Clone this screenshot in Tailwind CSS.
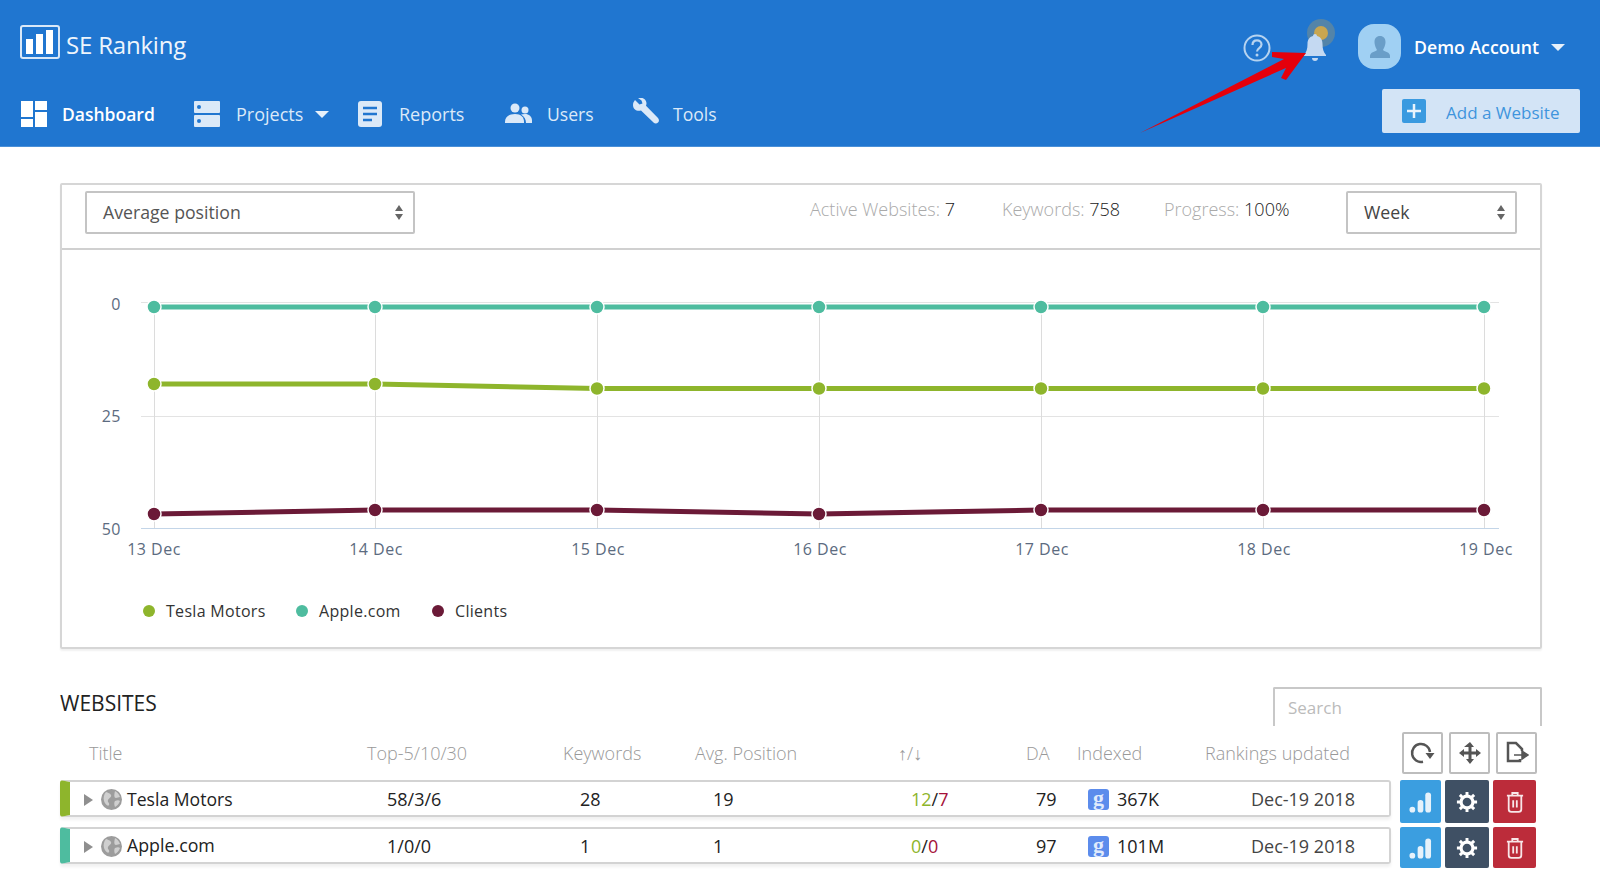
<!DOCTYPE html>
<html lang="en">
<head>
  <meta charset="UTF-8" />
  <title>SE Ranking - Dashboard</title>
  <script src="https://cdn.jsdelivr.net/npm/@tailwindcss/browser@4"></script>
</head>
<body class="relative h-[887px] w-[1600px] overflow-hidden bg-white font-['Open_Sans',sans-serif] text-[#222]">

  <!-- header -->
  <header class="h-[147px] bg-[#2076d0] border-b border-[#4a90d8]">
    <div class="flex h-[89px] items-center">
      <svg class="ml-[20px] mt-[-5px]" width="40" height="34" viewBox="0 0 40 34">
        <rect x="1" y="1" width="38" height="32" rx="2" fill="none" stroke="#d9e8f8" stroke-width="2"/>
        <rect x="6" y="14" width="7" height="15" fill="#fff"/>
        <rect x="16" y="9" width="7" height="20" fill="#fff"/>
        <rect x="26" y="5" width="7" height="24" fill="#fff"/>
      </svg>
      <span class="ml-[6px] w-[121px] whitespace-nowrap text-[24px] font-medium leading-none tracking-[-0.2px] text-[#eef5fc]">SE Ranking</span>

      <svg class="ml-[1056px] mt-[6px]" width="28" height="28" viewBox="0 0 28 28">
        <circle cx="14" cy="14" r="12.5" fill="none" stroke="#b6d3f0" stroke-width="2"/>
        <path d="M9.5 11c0-3 2-4.600 4.500-4.600s4.500 1.600 4.500 4.200c0 3.600-4.500 3.400-4.500 7" fill="none" stroke="#b6d3f0" stroke-width="2.200"/>
        <circle cx="14" cy="21" r="1.500" fill="#b6d3f0"/>
      </svg>

      <div class="relative ml-[30px] h-[42px] w-[30px]">
        <span class="absolute left-[6px] top-[-5px] h-[28px] w-[28px] rounded-full bg-[#c9a64f]/30"></span>
        <span class="absolute left-[13px] top-[2px] h-[14px] w-[14px] rounded-full bg-[#c9a64f]"></span>
        <svg class="absolute left-[3px] top-[10px]" width="22" height="28" viewBox="0 0 22 28">
          <path d="M11 0c1.200 0 2 .8 2 2 4 1 5.500 4 5.500 8 0 5 1 8 3.500 11v1H0v-1c2.500-3 3.500-6 3.500-11 0-4 1.500-7 5.500-8 0-1.200.8-2 2-2z" fill="#c4d9f2"/>
          <path d="M8 24h6c0 2-1.200 3-3 3s-3-1-3-3z" fill="#c4d9f2"/>
        </svg>
      </div>

      <div class="ml-[27px] mt-[4px] flex h-[45px] w-[43px] items-center justify-center rounded-[16px] bg-[#a0d0f3]">
        <svg width="22" height="24" viewBox="0 0 22 24"><path d="M11 1c3.500 0 5.500 2.500 5.500 6S14.500 14 14 15c2 2 7 2 7 6v2H1v-2c0-4 5-4 7-6-.5-1-2.500-4.500-2.500-8S7.500 1 11 1z" fill="#6a9ec8"/></svg>
      </div>
      <span class="ml-[13px] mt-[6px] text-[17.7px] font-semibold text-white">Demo Account</span>
      <span class="ml-[12px] mt-[6px] h-0 w-0 border-x-[7px] border-t-[7px] border-x-transparent border-t-[#e6f0fa]"></span>
    </div>

    <div class="flex h-[57px] items-start">
      <nav class="flex h-[50px] w-[717px] items-center text-[18px] text-[#dbe9f8]">
        <a class="ml-[21px] flex w-[173px] items-center text-[17.5px] font-semibold text-white">
          <svg width="26" height="26" viewBox="0 0 26 26" fill="#fff"><rect width="12" height="16"/><rect x="14" width="12" height="9"/><rect y="18" width="12" height="8"/><rect x="14" y="11" width="12" height="15"/></svg>
          <span class="ml-[15px]">Dashboard</span>
        </a>
        <a class="flex w-[164px] items-center">
          <svg width="26" height="26" viewBox="0 0 26 26"><rect width="26" height="12" rx="1" fill="#dbe9f8"/><rect y="14" width="26" height="12" rx="1" fill="#dbe9f8"/><circle cx="5" cy="6" r="2" fill="#2076d0"/><circle cx="5" cy="20" r="2" fill="#2076d0"/></svg>
          <span class="ml-[16px]">Projects</span>
          <span class="ml-[12px] h-0 w-0 border-x-[7px] border-t-[7px] border-x-transparent border-t-[#e6f0fa]"></span>
        </a>
        <a class="flex w-[147px] items-center">
          <svg width="24" height="26" viewBox="0 0 24 26"><rect width="24" height="26" rx="3" fill="#dbe9f8"/><path d="M5 7h14M5 13h14M5 19h9" stroke="#2076d0" stroke-width="2.500"/></svg>
          <span class="ml-[17px]">Reports</span>
        </a>
        <a class="flex w-[128px] items-center">
          <svg width="27" height="22" viewBox="0 0 27 22" fill="#dbe9f8"><circle cx="10" cy="5" r="4.500"/><path d="M0 19c0-5 4-8 10-8s9 3 9 8v1H0z"/><circle cx="20" cy="7" r="3.500"/><path d="M16 11.500c1-.4 2.500-.6 4-.6 4 0 7 2.400 7 6.600v2.500h-6c0-3.500-1.500-6.500-5-8.500z"/></svg>
          <span class="ml-[15px] text-[17.6px]">Users</span>
        </a>
        <a class="flex items-center">
          <svg class="mt-[-6px]" width="26" height="26" viewBox="0 0 26 26"><path d="M2 2l4.500 4.500 3-1-1-3L5 0c4-1 8 .5 8.500 5 0 1-.2 2-.5 2.700L25 20c1.500 2 1 3.500 0 4.500s-3 1.500-4.500 0L8 12.500c-4 1.200-8-1.200-8-5.500 0-2 .8-3.500 2-5z" fill="#dbe9f8"/></svg>
          <span class="ml-[14px] text-[17.6px]">Tools</span>
        </a>
      </nav>
      <button class="ml-[665px] flex h-[44px] w-[198px] items-center rounded-[2px] bg-[#d3e4f6] text-[17px] text-[#3f95dd]">
        <span class="ml-[20px] flex h-[24px] w-[24px] items-center justify-center rounded-[2px] bg-[#3a9ae0]">
          <svg width="14" height="14" viewBox="0 0 14 14"><path d="M7 0v14M0 7h14" stroke="#e8f3fc" stroke-width="2.500"/></svg>
        </span>
        <span class="ml-[20px] mt-[3px]">Add a Website</span>
      </button>
    </div>
  </header>

  <!-- arrow annotation -->
  <svg class="absolute left-0 top-0" width="1600" height="147" viewBox="0 0 1600 147">
    <path d="M1140 133L1284 59 1272 57 1272 52 1306 53 1286 80 1281 78 1286 68z" fill="#e5000b"/>
  </svg>

  <main class="ml-[60px] w-[1482px]">
    <!-- chart card -->
    <section class="mt-[36px] h-[466px] rounded-[2px] border-2 border-[#d6d6d6] shadow-[0_2px_2px_rgba(0,0,0,0.06)]">
      <div class="flex h-[65px] items-start border-b-2 border-[#d0d0d0] pt-[6px]">
        <div class="ml-[23px] flex h-[43px] w-[330px] items-center justify-between rounded-[2px] border-2 border-[#c4c4c4] pl-[16px] pr-[10px] text-[17.7px] text-[#555]">
          <span>Average position</span>
          <span class="flex flex-col gap-[3px]">
            <span class="h-0 w-0 border-x-[4px] border-b-[6px] border-x-transparent border-b-[#666]"></span>
            <span class="h-0 w-0 border-x-[4px] border-t-[6px] border-x-transparent border-t-[#666]"></span>
          </span>
        </div>
        <div class="ml-[395px] mt-[5px] flex text-[18px] font-light text-[#aaa]">
          <span class="w-[192px]">Active Websites: <span class="text-[#222]">7</span></span>
          <span class="w-[162px]">Keywords: <span class="text-[#222]">758</span></span>
          <span class="w-[182px]">Progress: <span class="text-[#222]">100%</span></span>
        </div>
        <div class="flex h-[43px] w-[171px] items-center justify-between rounded-[2px] border-2 border-[#c4c4c4] pl-[16px] pr-[10px] text-[17.7px] text-[#444]">
          <span>Week</span>
          <span class="flex flex-col gap-[3px]">
            <span class="h-0 w-0 border-x-[4px] border-b-[6px] border-x-transparent border-b-[#666]"></span>
            <span class="h-0 w-0 border-x-[4px] border-t-[6px] border-x-transparent border-t-[#666]"></span>
          </span>
        </div>
      </div>

      <svg class="block" width="1478" height="330" viewBox="62 250 1478 330" font-family="Open Sans" font-size="16" letter-spacing="0.5" fill="#5c6b80">
        <g stroke="#e3e3e3" stroke-width="1">
          <path d="M141 302.500H1499M141 416.500H1499"/>
          <path d="M154.500 302V528M375.500 302V528M597.500 302V528M819.500 302V528M1041.500 302V528M1263.500 302V528M1484.500 302V528" stroke="#dcdcdc"/>
        </g>
        <path d="M141 528.500H1499" stroke="#c3d5e8"/>
        <g text-anchor="end">
          <text x="121" y="310">0</text>
          <text x="121" y="422">25</text>
          <text x="121" y="535">50</text>
        </g>
        <g text-anchor="middle">
          <text x="154" y="555">13 Dec</text>
          <text x="376" y="555">14 Dec</text>
          <text x="598" y="555">15 Dec</text>
          <text x="820" y="555">16 Dec</text>
          <text x="1042" y="555">17 Dec</text>
          <text x="1264" y="555">18 Dec</text>
          <text x="1486" y="555">19 Dec</text>
        </g>
        <g fill="none" stroke-width="5">
          <path d="M154 307H1484" stroke="#4ebc9f"/>
          <path d="M154 384H375L597 388.500H1484" stroke="#8eb52c"/>
          <path d="M154 514L375 510H597L819 514 1041 510H1484" stroke="#6b1a37"/>
        </g>
        <g fill="#4ebc9f" stroke="#fff" stroke-width="1.500">
          <circle cx="154" cy="307" r="7"/><circle cx="375" cy="307" r="7"/><circle cx="597" cy="307" r="7"/><circle cx="819" cy="307" r="7"/><circle cx="1041" cy="307" r="7"/><circle cx="1263" cy="307" r="7"/><circle cx="1484" cy="307" r="7"/>
        </g>
        <g fill="#8eb52c" stroke="#fff" stroke-width="1.500">
          <circle cx="154" cy="384" r="7"/><circle cx="375" cy="384" r="7"/><circle cx="597" cy="388.500" r="7"/><circle cx="819" cy="388.500" r="7"/><circle cx="1041" cy="388.500" r="7"/><circle cx="1263" cy="388.500" r="7"/><circle cx="1484" cy="388.500" r="7"/>
        </g>
        <g fill="#6b1a37" stroke="#fff" stroke-width="1.500">
          <circle cx="154" cy="514" r="7"/><circle cx="375" cy="510" r="7"/><circle cx="597" cy="510" r="7"/><circle cx="819" cy="514" r="7"/><circle cx="1041" cy="510" r="7"/><circle cx="1263" cy="510" r="7"/><circle cx="1484" cy="510" r="7"/>
        </g>
      </svg>

      <div class="ml-[81px] mt-[19px] flex items-center text-[16px] text-[#333]">
        <span class="h-[12px] w-[12px] rounded-full bg-[#8eb52c]"></span><span class="ml-[11px] w-[130px] tracking-[0.3px]">Tesla Motors</span>
        <span class="h-[12px] w-[12px] rounded-full bg-[#4ebc9f]"></span><span class="ml-[11px] w-[113px] tracking-[0.3px]">Apple.com</span>
        <span class="h-[12px] w-[12px] rounded-full bg-[#6b1a37]"></span><span class="ml-[11px] tracking-[0.3px]">Clients</span>
      </div>
    </section>

    <!-- websites -->
    <section class="mt-[38px] flex h-[39px] items-start justify-between">
      <h2 class="mt-[2px] text-[21px] leading-[28px] text-[#222]">WEBSITES</h2>
      <div class="flex h-[39px] w-[269px] items-center rounded-t-[2px] border-x-2 border-t-2 border-[#c8c8c8] pl-[13px] text-[17px] text-[#bbb]">Search</div>
    </section>

    <div class="mt-[5px] flex h-[44px] items-center text-[18px] font-light text-[#999]">
      <span class="ml-[29px] w-[278px]">Title</span>
      <span class="w-[196px]">Top-5/10/30</span>
      <span class="w-[132px]">Keywords</span>
      <span class="w-[203px]">Avg. Position</span>
      <span class="w-[128px]">↑/↓</span>
      <span class="w-[51px]">DA</span>
      <span class="w-[128px]">Indexed</span>
      <span class="w-[197px]">Rankings updated</span>
      <span class="flex gap-[6px]">
        <span class="flex h-[42px] w-[41px] items-center justify-center rounded-[2px] border-2 border-[#bdbdbd]">
          <svg width="25" height="24" viewBox="0 0 25 24"><path d="M13 20.800A9 9 0 1 1 20 11" fill="none" stroke="#555" stroke-width="2.500"/><path d="M15.500 12h9l-4.500 6z" fill="#555"/></svg>
        </span>
        <span class="flex h-[42px] w-[41px] items-center justify-center rounded-[2px] border-2 border-[#bdbdbd]">
          <svg width="22" height="22" viewBox="0 0 22 22" fill="#555"><path d="M11 0l4 5H5zM11 22l-4-5h8zM0 11l5-4v8zM22 11l-5 4V7z"/><path d="M9.500 4h3v14h-3z"/><path d="M4 9.500h14v3H4z"/></svg>
        </span>
        <span class="flex h-[42px] w-[41px] items-center justify-center rounded-[2px] border-2 border-[#bdbdbd]">
          <svg width="24" height="24" viewBox="0 0 24 24"><path d="M15 18v2H3V2h8l6 6v2" fill="none" stroke="#555" stroke-width="2.500"/><path d="M9 14h9M17 10l6 4-6 4z" fill="#555" stroke="#555" stroke-width="1.500"/></svg>
        </span>
      </span>
    </div>

    <!-- rows -->
    <div class="mt-[5px] flex flex-col gap-[4px]">
      <div class="flex h-[43px] items-start">
        <div class="flex h-[37px] w-[1331px] items-center rounded-[3px] border-2 border-l-[10px] border-[#d3d3d3] border-l-[#8eb52c] pt-[2px] text-[18px] text-[#222] shadow-[0_3px_3px_rgba(0,0,0,0.06)]">
          <span class="ml-[14px] h-0 w-0 border-y-[6px] border-l-[9px] border-y-transparent border-l-[#8f8f8f]"></span>
          <svg class="ml-[8px]" width="21" height="21" viewBox="0 0 21 21"><circle cx="10.500" cy="10.500" r="10.500" fill="#9c9c9c"/><path d="M5 3c2 1 4 1 5 3s-2 3-3 5 2 3 1 5-4-1-5-4 0-7 2-9zM14 2c2 1 4 3 5 6l-4 1c-2 0-2-3-1-7zM14 12c2-1 4-1 5 0-1 3-3 5-5 6-1-2-1-5 0-6z" fill="#cfcfcf"/></svg>
          <span class="ml-[5px] w-[260px] text-[17.6px]">Tesla Motors</span>
          <span class="w-[193px]">58/3/6</span>
          <span class="w-[133px]">28</span>
          <span class="w-[198px]">19</span>
          <span class="w-[125px]"><span class="text-[#8eb52c]">12</span>/<span class="text-[#a5123a]">7</span></span>
          <span class="w-[52px]">79</span>
          <span class="flex h-[21px] w-[21px] items-center justify-center rounded-[3px] bg-[#5c8cec] pb-[4px] font-['Liberation_Serif',serif] text-[22px] font-bold leading-none text-[#e0ebfc]">g</span>
          <span class="ml-[8px] w-[134px]">367K</span>
          <span class="text-[#444]">Dec-19 2018</span>
        </div>
        <span class="ml-[9px] flex h-[43px] w-[41px] items-center justify-center rounded-[2px] bg-[#3b9ee0]">
          <svg width="23" height="24" viewBox="0 0 24 24" fill="#e6f2fb"><circle cx="3.500" cy="20" r="3"/><rect x="9" y="10" width="6" height="13" rx="3"/><rect x="17" y="2" width="6" height="21" rx="3"/></svg>
        </span>
        <span class="ml-[4px] flex h-[43px] w-[44px] items-center justify-center rounded-[2px] bg-[#3f5064]">
          <svg width="22" height="22" viewBox="0 0 24 24"><circle cx="12" cy="12" r="6.500" fill="none" stroke="#fff" stroke-width="3.500"/><path d="M12 1v5M12 18v5M1 12h5M18 12h5M4.200 4.200l3.500 3.500M16.300 16.300l3.500 3.500M4.200 19.800l3.500-3.500M16.300 7.700l3.500-3.500" stroke="#fff" stroke-width="3.200"/></svg>
        </span>
        <span class="ml-[4px] flex h-[43px] w-[43px] items-center justify-center rounded-[2px] bg-[#bc2c3a]">
          <svg width="18" height="22" viewBox="0 0 20 24" fill="none" stroke="#f8e6e8" stroke-width="2"><path d="M1 5h18M7 5V2h6v3M3 5v15a3 3 0 0 0 3 3h8a3 3 0 0 0 3-3V5M8 10v8M12 10v8"/></svg>
        </span>
      </div>
      <div class="flex h-[41px] items-start">
        <div class="flex h-[37px] w-[1331px] items-center rounded-[3px] border-2 border-l-[10px] border-[#d3d3d3] border-l-[#4ebc9f] pt-[2px] text-[18px] text-[#222] shadow-[0_3px_3px_rgba(0,0,0,0.06)]">
          <span class="ml-[14px] h-0 w-0 border-y-[6px] border-l-[9px] border-y-transparent border-l-[#8f8f8f]"></span>
          <svg class="ml-[8px]" width="21" height="21" viewBox="0 0 21 21"><circle cx="10.500" cy="10.500" r="10.500" fill="#9c9c9c"/><path d="M5 3c2 1 4 1 5 3s-2 3-3 5 2 3 1 5-4-1-5-4 0-7 2-9zM14 2c2 1 4 3 5 6l-4 1c-2 0-2-3-1-7zM14 12c2-1 4-1 5 0-1 3-3 5-5 6-1-2-1-5 0-6z" fill="#cfcfcf"/></svg>
          <span class="ml-[5px] mt-[-2px] w-[260px] text-[17.8px]">Apple.com</span>
          <span class="w-[193px]">1/0/0</span>
          <span class="w-[133px]">1</span>
          <span class="w-[198px]">1</span>
          <span class="w-[125px]"><span class="text-[#8eb52c]">0</span>/<span class="text-[#a5123a]">0</span></span>
          <span class="w-[52px]">97</span>
          <span class="flex h-[21px] w-[21px] items-center justify-center rounded-[3px] bg-[#5c8cec] pb-[4px] font-['Liberation_Serif',serif] text-[22px] font-bold leading-none text-[#e0ebfc]">g</span>
          <span class="ml-[8px] w-[134px]">101M</span>
          <span class="text-[#444]">Dec-19 2018</span>
        </div>
        <span class="ml-[9px] flex h-[41px] w-[41px] items-center justify-center rounded-[2px] bg-[#3b9ee0]">
          <svg width="23" height="24" viewBox="0 0 24 24" fill="#e6f2fb"><circle cx="3.500" cy="20" r="3"/><rect x="9" y="10" width="6" height="13" rx="3"/><rect x="17" y="2" width="6" height="21" rx="3"/></svg>
        </span>
        <span class="ml-[4px] flex h-[41px] w-[44px] items-center justify-center rounded-[2px] bg-[#3f5064]">
          <svg width="22" height="22" viewBox="0 0 24 24"><circle cx="12" cy="12" r="6.500" fill="none" stroke="#fff" stroke-width="3.500"/><path d="M12 1v5M12 18v5M1 12h5M18 12h5M4.200 4.200l3.500 3.500M16.300 16.300l3.500 3.500M4.200 19.800l3.500-3.500M16.300 7.700l3.500-3.500" stroke="#fff" stroke-width="3.200"/></svg>
        </span>
        <span class="ml-[4px] flex h-[41px] w-[43px] items-center justify-center rounded-[2px] bg-[#bc2c3a]">
          <svg width="18" height="22" viewBox="0 0 20 24" fill="none" stroke="#f8e6e8" stroke-width="2"><path d="M1 5h18M7 5V2h6v3M3 5v15a3 3 0 0 0 3 3h8a3 3 0 0 0 3-3V5M8 10v8M12 10v8"/></svg>
        </span>
      </div>
    </div>
  </main>
</body>
</html>
